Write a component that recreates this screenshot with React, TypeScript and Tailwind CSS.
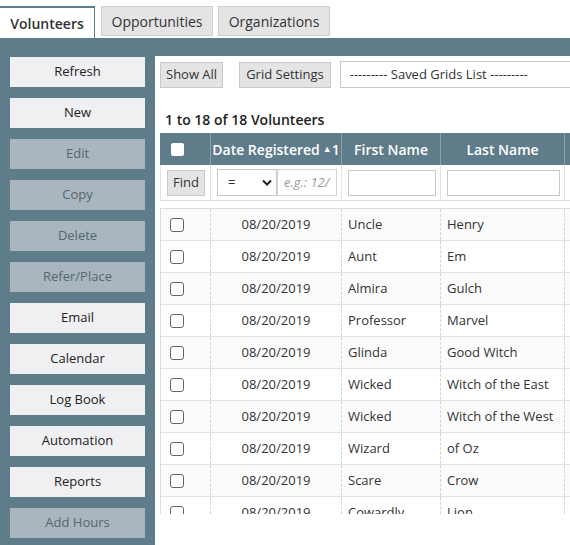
import React from "react";

const sideButtons = [
  { label: "Refresh", enabled: true },
  { label: "New", enabled: true },
  { label: "Edit", enabled: false },
  { label: "Copy", enabled: false },
  { label: "Delete", enabled: false },
  { label: "Refer/Place", enabled: false },
  { label: "Email", enabled: true },
  { label: "Calendar", enabled: true },
  { label: "Log Book", enabled: true },
  { label: "Automation", enabled: true },
  { label: "Reports", enabled: true },
  { label: "Add Hours", enabled: false },
];

const rows = [
  ["Uncle", "Henry"],
  ["Aunt", "Em"],
  ["Almira", "Gulch"],
  ["Professor", "Marvel"],
  ["Glinda", "Good Witch"],
  ["Wicked", "Witch of the East"],
  ["Wicked", "Witch of the West"],
  ["Wizard", "of Oz"],
  ["Scare", "Crow"],
  ["Cowardly", "Lion"],
];

const App: React.FC = () => {
  return (
    <div className="w-[570px] h-[545px] overflow-hidden bg-white font-['Open_Sans',sans-serif] text-[#333]">
      {/* Tabs */}
      <div className="h-[38px] flex items-end">
        <div className="w-[95px] h-[32px] bg-white border-t-[2px] border-r border-[#5f7c8a] flex items-center justify-center text-[14px] font-semibold text-[#333]">
          Volunteers
        </div>
        <div className="ml-[6px] mb-[2px] w-[112px] h-[30px] bg-[#e4e4e4] border border-[#cfcfcf] flex items-center justify-center text-[14px] text-[#333]">
          Opportunities
        </div>
        <div className="ml-[5px] mb-[2px] w-[112px] h-[30px] bg-[#e4e4e4] border border-[#cfcfcf] flex items-center justify-center text-[14px] text-[#333]">
          Organizations
        </div>
      </div>

      {/* Body */}
      <div className="flex bg-[#5f7c8a] h-[507px]">
        <div className="w-[155px] shrink-0 pt-[19px] px-[10px] flex flex-col gap-[11px]">
          {sideButtons.map((b) => (
            <div
              key={b.label}
              className={
                b.enabled
                  ? "h-[30px] bg-[#f0f0f2] flex items-center justify-center text-[13px] text-[#222]"
                  : "h-[30px] bg-[#a9b6bd] flex items-center justify-center text-[13px] text-[#56666f]"
              }
            >
              {b.label}
            </div>
          ))}
        </div>

        <div className="flex-1 min-w-0 mt-[18px] bg-white pl-[5px] pt-[5px] overflow-hidden">
          {/* Toolbar */}
          <div className="flex items-center h-[27px] whitespace-nowrap">
            <div className="shrink-0 h-[26px] px-[5px] bg-[#e4e4e4] border border-[#c8c8c8] flex items-center text-[13px]">
              Show All
            </div>
            <div className="shrink-0 ml-[16px] h-[26px] px-[6px] bg-[#e4e4e4] border border-[#c8c8c8] flex items-center text-[13px]">
              Grid Settings
            </div>
            <div className="shrink-0 ml-[9px] h-[27px] w-[260px] border border-[#c8c8c8] flex items-center pl-[9px] text-[13px]">
              --------- Saved Grids List ---------
            </div>
          </div>

          <div className="mt-[21px] pl-[5px] text-[14px] font-semibold text-[#222]">
            1 to 18 of 18 Volunteers
          </div>

          {/* Table */}
          <div className="mt-[3px] w-[500px]">
            <div className="flex h-[32px] bg-[#5f7c8a] text-white text-[14px] font-semibold whitespace-nowrap">
              <div className="w-[51px] flex items-center pl-[11px] border-r border-[#8ba1ac]">
                <div className="w-[13px] h-[13px] bg-white rounded-[2px]" />
              </div>
              <div className="w-[131px] flex items-center justify-center border-r border-[#8ba1ac]">
                Date Registered <span className="ml-[3px] text-[9px]">▲</span>1
              </div>
              <div className="w-[99px] flex items-center justify-center border-r border-[#8ba1ac]">
                First Name
              </div>
              <div className="w-[124px] flex items-center justify-center border-r border-[#8ba1ac]">
                Last Name
              </div>
              <div className="flex-1" />
            </div>

            <div className="flex h-[36px] border-b border-[#dcdcdc]">
              <div className="w-[51px] flex items-center pl-[6px] border-r border-l border-[#e2e2e2]">
                <div className="h-[26px] px-[5px] bg-[#e4e4e4] border border-[#c8c8c8] flex items-center text-[13px]">
                  Find
                </div>
              </div>
              <div className="w-[131px] flex items-center pl-[6px] border-r border-[#e2e2e2]">
                <div className="w-[60px] h-[27px] border border-[#c8c8c8] flex items-center justify-between pl-[10px] pr-[4px] text-[13px]">
                  <span>=</span>
                  <svg width="10" height="7" viewBox="0 0 10 7">
                    <path d="M1 1.5 L5 5.5 L9 1.5" fill="none" stroke="#222" strokeWidth="2" />
                  </svg>
                </div>
                <div className="w-[60px] h-[27px] border border-[#d4d4d4] flex items-center pl-[6px] text-[13px] italic text-[#999] overflow-hidden whitespace-nowrap">
                  e.g.: 12/
                </div>
              </div>
              <div className="w-[99px] flex items-center pl-[6px] border-r border-[#e2e2e2]">
                <div className="w-[88px] h-[26px] border border-[#c8c8c8]" />
              </div>
              <div className="w-[124px] flex items-center pl-[6px] border-r border-[#e2e2e2]">
                <div className="w-[113px] h-[26px] border border-[#c8c8c8]" />
              </div>
              <div className="flex-1" />
            </div>

            {/* Body rows */}
            <div className="mt-[7px] h-[306px] overflow-hidden border-t border-l border-[#dcdcdc]">
              {rows.map(([first, last], i) => (
                <div
                  key={i}
                  className={
                    i % 2 === 0
                      ? "flex h-[32px] border-b border-[#e2e2e2] bg-[#fbfbfb] text-[13px]"
                      : "flex h-[32px] border-b border-[#e2e2e2] bg-white text-[13px]"
                  }
                >
                  <div className="w-[50px] flex items-center pl-[9px] border-r border-dashed border-[#d4d4d4]">
                    <div className="w-[14px] h-[14px] border border-[#666] rounded-[3px] bg-white" />
                  </div>
                  <div className="w-[131px] flex items-center justify-center border-r border-dashed border-[#d4d4d4]">
                    08/20/2019
                  </div>
                  <div className="w-[99px] flex items-center pl-[6px] border-r border-dashed border-[#d4d4d4]">
                    {first}
                  </div>
                  <div className="w-[124px] flex items-center pl-[6px] border-r border-dashed border-[#d4d4d4]">
                    {last}
                  </div>
                  <div className="flex-1" />
                </div>
              ))}
            </div>
          </div>
        </div>
      </div>
    </div>
  );
};

export default App;
